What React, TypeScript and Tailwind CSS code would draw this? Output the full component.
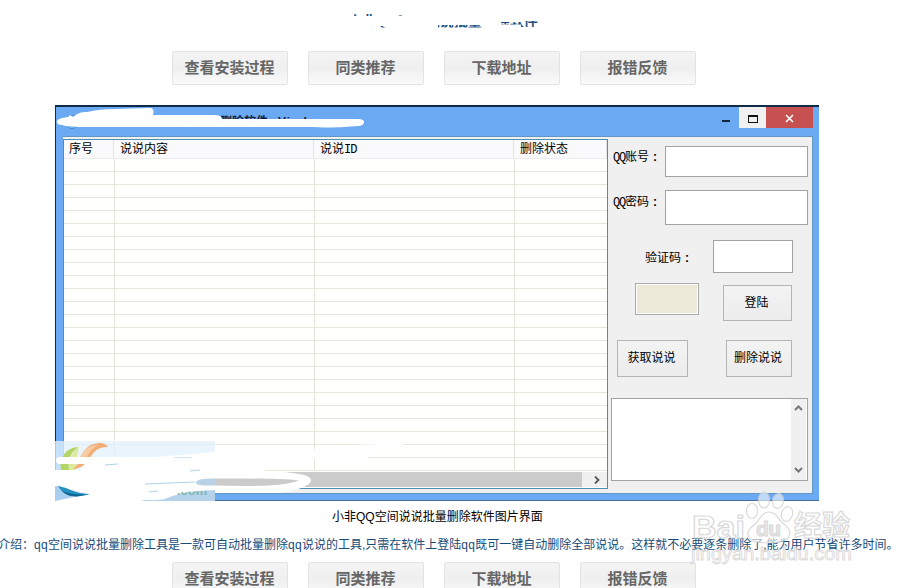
import React from "react";

const links = ["查看安装过程", "同类推荐", "下载地址", "报错反馈"];

function LinkRow() {
  return (
    <div className="flex gap-5 pl-[172px]">
      {links.map((label) => (
        <button
          key={label}
          className="h-[34px] w-[116px] shrink-0 rounded-[2px] border border-[#e3e3e3] bg-linear-to-b from-[#f4f4f4] via-[#efefef] to-[#fafafa] pr-[1px] text-[15px] leading-[32px] font-bold whitespace-nowrap text-[#666]"
        >
          {label}
        </button>
      ))}
    </div>
  );
}

function Title() {
  return (
    <div className="relative flex h-[51px] pt-[11px] pl-[348px]">
      <h1 className="text-[14px] leading-[20px] font-bold whitespace-nowrap text-[#1b5480]">
        小非QQ空间说说批量删除软件
      </h1>
      <svg className="absolute top-0 left-0" width="600" height="45" fill="#fff" fillRule="evenodd">
        <path d="M330 3h220v38H330z M354 14h48v2h-48z M372 26h18v1.500h-18z M438 25h44v2.500h-44z M501 22h20v2.500h-20z M521 21h18v6h-18z" />
      </svg>
    </div>
  );
}

function TitleBar() {
  return (
    <div className="relative flex h-[29px] items-start">
      <span className="mt-[6px] ml-[92px] text-[12px] leading-[18px] font-bold whitespace-nowrap text-[#111c40]">
        空间说说批量删除软件&nbsp;&nbsp; <span className="tracking-[1px]">Vind</span>
      </span>
      <div className="ml-auto flex pr-[6px]">
        <div className="flex h-[20px] w-[27px] justify-center pt-[13px]">
          <i className="h-[2px] w-[8px] bg-[#12233c]" />
        </div>
        <div className="flex h-[21px] w-[27px] items-center justify-center bg-[#f0f0f0] pt-[2px]">
          <i className="h-[8px] w-[10px] border border-t-2 border-[#111]" />
        </div>
        <div className="flex h-[21px] w-[47px] items-center justify-center bg-[#c75050] pt-[2px]">
          <svg width="9" height="9" viewBox="0 0 9 9" stroke="#fff" strokeWidth="1.6">
            <path d="M1 1l7 7M8 1L1 8" />
          </svg>
        </div>
      </div>
      <svg className="absolute -top-0.5 -left-px" width="330" height="32" viewBox="55 105 330 32">
        <circle cx="72" cy="122" r="6.500" fill="#83c0ef" stroke="#3c8cc9" />
        <path
          fill="#fff"
          d="M57 122c0-4 6-4 11-5l2-2 3 2c5-4 8-5 14-5 16-4 40-3 62-4 5 0 5 3 4 7h61c6 0 8 2 8 4h136c4 0 6 1 6 3s-2 4-6 4c-14 1-22 2-50 1H79c-9-1-12 0-17-2-3 0-5-1-5-3z"
        />
      </svg>
    </div>
  );
}

const columns = [
  { name: "序号", cls: "w-[50px] pl-[5px]" },
  { name: "说说内容", cls: "w-[200px] pl-[6px]" },
  { name: "说说ID", cls: "w-[200px] pl-[6px]" },
  { name: "删除状态", cls: "w-[93px] pl-[6px]" },
];
const rows = Array.from({ length: 24 }, (_, i) => i);

function PostList() {
  return (
    <div className="mt-[2px] flex h-[350px] w-[545px] flex-col overflow-hidden border border-[#4c91b3] bg-[#fffffd]">
      <div className="flex h-[19px] shrink-0 border-b border-[#ececec] bg-[#fafafc]">
        {columns.map((c) => (
          <div
            key={c.name}
            className={`${c.cls} shrink-0 border-r border-[#e3e3e8] text-[12px] leading-[18px] whitespace-nowrap text-black`}
          >
            {c.name === "说说ID" ? (
              <>说说<span className="font-['Liberation_Mono'] text-[12px] tracking-[-1px]">ID</span></>
            ) : (
              c.name
            )}
          </div>
        ))}
      </div>
      <div className="h-[313px] shrink-0 overflow-hidden">
        {rows.map((r) => (
          <div key={r} className="flex h-[13px] border-b border-[#e8e7dc]">
            <div className="w-[51px] border-r border-[#e3e3d9]" />
            <div className="w-[200px] border-r border-[#e3e3d9]" />
            <div className="w-[200px] border-r border-[#e3e3d9]" />
          </div>
        ))}
      </div>
      <div className="flex h-[15px] shrink-0 bg-[#f0f0f0]">
        <div className="w-[518px] bg-[#cbcbcb]" />
        <div className="flex flex-1 items-center justify-center pl-[4px]">
          <svg width="6" height="8" viewBox="0 0 6 8" fill="none" stroke="#555" strokeWidth="1.800">
            <path d="M1 0.500L4.500 4 1 7.500" />
          </svg>
        </div>
      </div>
    </div>
  );
}

const btn =
  "border border-[#b4b4b4] bg-linear-to-b from-[#f3f3f3] to-[#ececec] pr-[2px] pb-px text-[12px] whitespace-nowrap text-black";

function QQ() {
  return <span className="inline-block w-[12px] font-['Liberation_Mono'] text-[12px] tracking-[-1.2px]">QQ</span>;
}

function Colon() {
  return <span className="inline-block w-[12px] pl-[4px] font-bold">:</span>;
}

function LoginPanel() {
  return (
    <div className="flex w-[204px] flex-col pt-[9px] pl-[3px] text-[12px] text-black">
      <div className="flex h-[31px]">
        <label className="w-[54px] pl-[2px] leading-[22px] whitespace-nowrap"><QQ />账号<Colon /></label>
        <input className="w-[143px] border border-[#a3a3a3] bg-white" />
      </div>
      <div className="mt-[13px] flex h-[35px]">
        <label className="w-[54px] pl-[2px] leading-[24px] whitespace-nowrap"><QQ />密码<Colon /></label>
        <input className="w-[143px] border border-[#a3a3a3] bg-white" />
      </div>
      <div className="mt-[15px] flex h-[33px]">
        <label className="w-[102px] pl-[34px] leading-[36px] whitespace-nowrap">验证码<Colon /></label>
        <input className="w-[80px] border border-[#a3a3a3] bg-white" />
      </div>
      <div className="mt-[10px] flex h-[38px] items-start pl-[24px]">
        <div className="h-[32px] w-[64px] border border-[#aaa] bg-[#ece9d8] ring-1 ring-white ring-inset" />
        <button className={`${btn} mt-[2px] ml-[24px] h-[36px] w-[69px]`}>登陆</button>
      </div>
      <div className="mt-[19px] flex h-[37px] pl-[6px]">
        <button className={`${btn} w-[71px]`}>获取说说</button>
        <button className={`${btn} ml-[38px] w-[66px]`}>删除说说</button>
      </div>
      <div className="mt-[21px] flex h-[83px] w-[197px] border border-[#a3a3a3] bg-white">
        <div className="flex-1" />
        <div className="mr-[1px] flex w-[15px] flex-col items-center justify-between bg-[#f0f0f0] pt-[6px] pb-[7px]">
          <svg width="9" height="6" viewBox="0 0 9 6" fill="none" stroke="#777" strokeWidth="2">
            <path d="M1 5l3.500-3.500L8 5" />
          </svg>
          <svg width="9" height="6" viewBox="0 0 9 6" fill="none" stroke="#777" strokeWidth="2">
            <path d="M1 1l3.500 3.500L8 1" />
          </svg>
        </div>
      </div>
    </div>
  );
}

function SiteMark() {
  return (
    <svg className="absolute top-[332px] -left-px" width="370" height="64" viewBox="55 439 370 64">
      <path fill="#e3f1fc" fillOpacity=".78" d="M55 441h160v60H55z" />
      {/* brushed-out band */}
      <path fill="#fff" d="M60 457h95l38-3 42-4 90-1c15-3 30-5 75-5 8 1 6 3-4 4l-22 2c-2 3-4 5-6 8h-45c-25 5-45 9-60 13 28 1 48 3 48 9s-14 10-30 13H215l-20 1-45 7H55v-2l19-4 14-2c-8-2-20-3-28-6H54v-17h26l4-6H60c-5 0-5-7 0-7z" />
      <path fill="#b4d464" d="M61 470c-2-12 5-23 18-23-9 5-11 13-10 23z" />
      <path fill="#dcea9c" d="M69 470c-1-10 3-18 10-23-2 8-3 16-4 23z" />
      <path fill="#f1ad74" d="M73 469c9-5 7-25 26-26 5 0 8 2 9 4-20-1-16 21-35 22z" />
      <path fill="#f7cba3" d="M76 465c6-12 9-20 23-20-12 4-11 18-23 20z" />
      <path fill="#fff" d="M60 457h60v7H60c-5 0-5-7 0-7z" />
      <path fill="#cbcbcb" d="M215 478.500c35 0 68 0 84 2-14 6-50 6-84 5z" />
      <path fill="#b9d2e6" d="M196 482c2-3 8-3.500 19-3.500v7h-10c-5 0-10-1-9-3.500z" />
      <path fill="#a9cef1" d="M55 486h4l20 10c-8 2-16 3-24 5z" />
      <path fill="#2491bf" d="M58 486c12 2 17 8 32 8-12 4-26 3-32-8z" />
      <path fill="#0b6594" d="M62 491c8 3 15 4 25 3-9 4-20 3-25-3z" />
      <path fill="#b4d3ea" d="M141 501l4-1h18c12-6 26-9 52-11v12z" />
      <text x="177" y="495" fill="#82b7ae" fontSize="13" fontWeight="bold" fontFamily="Liberation Sans, sans-serif">.com</text>
      <path fill="#fff" d="M170 486h45v4l-32 2-12 1z" />
      <path fill="none" stroke="#9bc5df" strokeWidth=".8" d="M105 465l13-1M190 471l10-1M145 484l50-2M149 492l9-1" />
      <path fill="none" stroke="#d5e6f2" strokeWidth="1" d="M174 457.500h18" />
    </svg>
  );
}

function AppWindow() {
  return (
    <div className="relative mt-[20px] ml-[55px] h-[396px] w-[764px] border-t-2 border-b border-l border-[#102b48] border-b-[#446f9b] bg-[#6ba9f3]">
      <TitleBar />
      <div className="ml-[7px] flex h-[358px] w-[750px] border border-l-0 border-[#6197c2] bg-[#f0f0f0]">
        <PostList />
        <LoginPanel />
      </div>
      <SiteMark />
    </div>
  );
}

function Watermark() {
  return (
    <svg className="absolute top-[488px] left-[685px]" width="175" height="85" viewBox="685 488 175 85" opacity=".82">
      <g fill="#fff" fillOpacity=".7" stroke="#d2d2d2" strokeWidth="1.200">
        <ellipse cx="752" cy="511" rx="5.500" ry="7.500" />
        <ellipse cx="764" cy="500" rx="5.500" ry="8" />
        <ellipse cx="778" cy="501" rx="5.500" ry="7.500" transform="rotate(10 778 501)" />
        <ellipse cx="787" cy="514" rx="5.500" ry="7.500" transform="rotate(15 787 514)" />
        <path d="M769 512c-8 0-9 9-15 13-6 4-8 10-4 14 5 5 31 5 37 0 5-4 3-11-3-15-6-4-7-12-15-12z" />
        <g fontFamily="Liberation Sans, sans-serif" fontWeight="bold">
          <text x="692" y="538" fontSize="31" textLength="53" lengthAdjust="spacingAndGlyphs">Bai</text>
          <text x="756" y="536" fontSize="21" textLength="25" fill="#d8d8d8">du</text>
        </g>
        <text x="691" y="560" fontSize="18" strokeWidth=".8" textLength="161" lengthAdjust="spacingAndGlyphs" fontFamily="Liberation Sans, sans-serif">jingyan.baidu.com</text>
        <text x="794" y="536" fontSize="28" fontWeight="bold" fontFamily="Noto Sans CJK SC, sans-serif" textLength="56">经验</text>
      </g>
    </svg>
  );
}

export default function App() {
  return (
    <main className="relative h-[588px] w-[901px] overflow-hidden bg-white font-['Liberation_Sans','Noto_Sans_CJK_SC',sans-serif]">
      <Title />
      <LinkRow />
      <AppWindow />
      <p className="mt-[7px] pl-[332px] text-[12px] leading-[18px] whitespace-nowrap text-black">
        小非QQ空间说说批量删除软件图片界面
      </p>
      <p className="mt-[10px] -ml-[2px] text-[12px] leading-[18px] whitespace-nowrap text-[#174b78]">
        介绍：<span className="tracking-[0.3px]">qq</span>空间说说批量删除工具是一款可自动批量删除<span className="tracking-[0.3px]">qq</span>说说的工具,只需在软件上登陆<span className="tracking-[0.3px]">qq</span>既可一键自动删除全部说说。这样就不必要逐条删除了,能为用户节省许多时间。
      </p>
      <div className="mt-[8px]">
        <LinkRow />
      </div>
      <Watermark />
    </main>
  );
}
